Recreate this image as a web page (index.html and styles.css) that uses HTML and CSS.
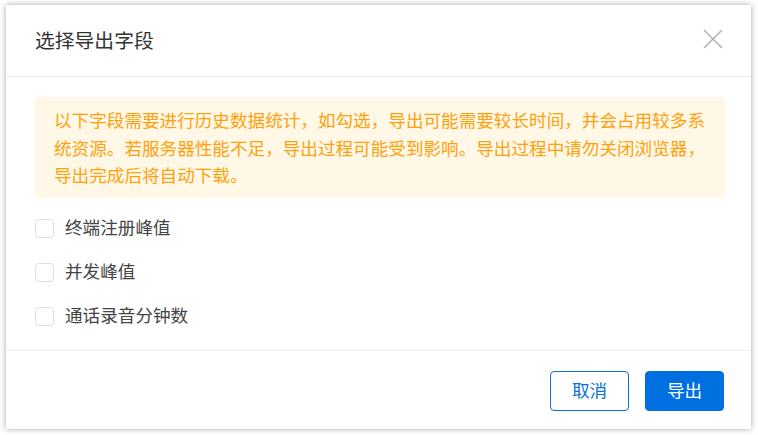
FILE: index.html
```html
<!DOCTYPE html>
<html lang="zh-CN">
<head>
<meta charset="utf-8">
<title>选择导出字段</title>
<link rel="stylesheet" href="styles.css">
</head>
<body>
<div class="dialog">
  <div class="dialog-header">
    <span class="dialog-title">选择导出字段</span>
    <button class="close-btn" aria-label="关闭">
      <svg width="20" height="20" viewBox="0 0 20 20"><path d="M1 1 L19 19 M19 1 L1 19" stroke="#b3b3b3" stroke-width="1.6" fill="none"/></svg>
    </button>
  </div>
  <div class="dialog-body">
    <div class="alert">以下字段需要进行历史数据统计，如勾选，导出可能需要较长时间，并会占用较多系统资源。若服务器性能不足，导出过程可能受到影响。导出过程中请勿关闭浏览器，导出完成后将自动下载。</div>
    <ul class="field-list">
      <li class="field"><span class="checkbox"></span><span class="label">终端注册峰值</span></li>
      <li class="field"><span class="checkbox"></span><span class="label">并发峰值</span></li>
      <li class="field"><span class="checkbox"></span><span class="label">通话录音分钟数</span></li>
    </ul>
  </div>
  <div class="dialog-footer">
    <button class="btn btn-default">取消</button>
    <button class="btn btn-primary">导出</button>
  </div>
</div>
</body>
</html>
```
FILE: styles.css
```css
* { box-sizing: border-box; }
html, body { margin: 0; padding: 0; background: #ffffff; }
body {
  padding: 5px 7px 6px 6px;
  font-family: "Noto Sans CJK SC", "Noto Sans", sans-serif;
}
.dialog {
  width: 745px;
  height: 424px;
  background: #fff;
  box-shadow: 0 0 6px rgba(0, 0, 0, 0.35);
  display: flex;
  flex-direction: column;
}
.dialog-header {
  height: 72px;
  border-bottom: 1px solid #ececec;
  display: flex;
  align-items: center;
  justify-content: space-between;
  padding: 0 28px 0 29px;
}
.dialog-title {
  font-size: 19.8px;
  color: #333;
  line-height: 1;
  margin-top: -2px;
}
.close-btn {
  border: 0;
  background: transparent;
  padding: 0;
  width: 20px;
  height: 20px;
  display: flex;
  margin-top: -3px;
}
.dialog-body {
  padding: 20px 26px 12px 29px;
  flex: 1;
  border-bottom: 1px solid #ececec;
}
.alert {
  background: #fff8e6;
  color: #ffa00f;
  font-size: 17.6px;
  line-height: 27.7px;
  padding: 9px 19px 9px 19px;
  border-radius: 4px;
}
.field-list {
  list-style: none;
  margin: 8px 0 0;
  padding: 0;
}
.field {
  height: 44px;
  display: flex;
  align-items: center;
}
.checkbox {
  width: 19px;
  height: 19px;
  border: 1px solid #dcdfe6;
  border-radius: 4px;
  background: #fff;
  margin-right: 11px;
  flex: none;
}
.label {
  font-size: 17.6px;
  color: #444;
  line-height: 1;
  margin-top: -2px;
}
.dialog-footer {
  display: flex;
  justify-content: flex-end;
  gap: 16px;
  padding: 20px 27px 18px 29px;
}
.btn {
  width: 79px;
  height: 40px;
  border-radius: 4px;
  font-family: "Noto Sans CJK SC", "Noto Sans", sans-serif;
  font-size: 17.6px;
  line-height: 1;
  padding: 0 0 2px;
  cursor: pointer;
}
.btn-default {
  background: #fff;
  border: 1px solid #0a6fd9;
  color: #0a6fd9;
}
.btn-primary {
  background: #006fe0;
  border: 1px solid #006fe0;
  color: #fff;
}
```
